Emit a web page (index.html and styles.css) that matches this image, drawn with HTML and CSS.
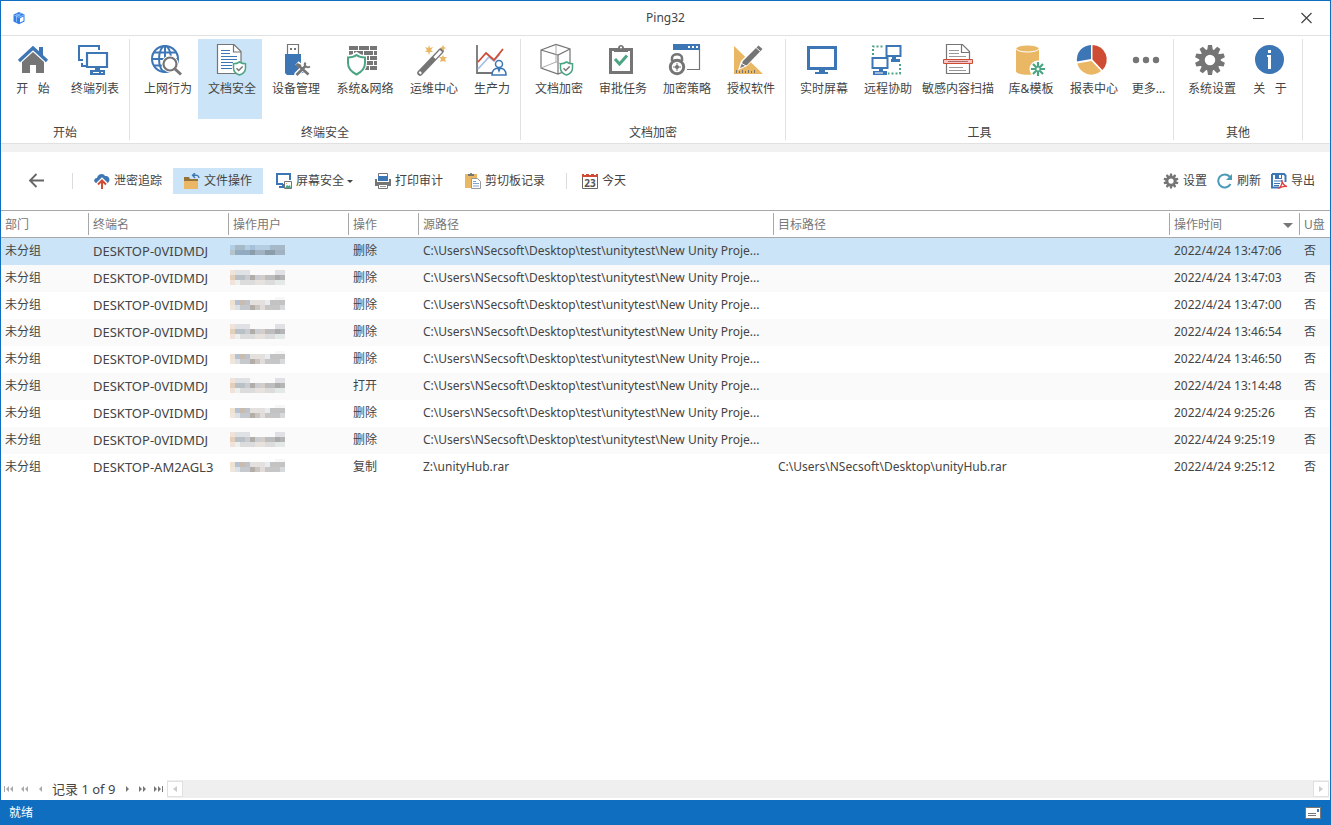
FILE: index.html
```html
<!DOCTYPE html>
<html lang="zh-CN">
<head>
<meta charset="utf-8">
<meta name="viewport" content="width=device-width, initial-scale=1">
<title>Ping32</title>
<link rel="stylesheet" href="styles.css">
</head>
<body>
<svg class="defs" aria-hidden="true">
  <defs>
    <symbol id="shield" viewBox="0 0 14 15">
      <path d="M7 1C5 2.3 3 2.8 1 2.8V7c0 3.500 2.500 5.800 6 7 3.500-1.200 6-3.500 6-7V2.800C11 2.800 9 2.300 7 1z" fill="#fff" stroke="#4ba583" stroke-width="1.500"/>
      <path d="M4 7.300l2.200 2.200L10.200 5.500" fill="none" stroke="#777" stroke-width="1.500"/>
    </symbol>
    <symbol id="gear" viewBox="0 0 32 32">
      <g fill="#757575">
        <path d="M14 1h4l1 6h-6zM14 31h4l1-6h-6z"/>
        <path d="M14 1h4l1 6h-6zM14 31h4l1-6h-6z" transform="rotate(36 16 16)"/>
        <path d="M14 1h4l1 6h-6zM14 31h4l1-6h-6z" transform="rotate(72 16 16)"/>
        <path d="M14 1h4l1 6h-6zM14 31h4l1-6h-6z" transform="rotate(108 16 16)"/>
        <path d="M14 1h4l1 6h-6zM14 31h4l1-6h-6z" transform="rotate(144 16 16)"/>
      </g>
      <circle cx="16" cy="16" r="8" fill="none" stroke="#757575" stroke-width="5.500"/>
    </symbol>
    <symbol id="mask-a" viewBox="0 0 11 3">
      <g shape-rendering="crispEdges">
        <path fill="#f1e3da" d="M0 0h1v1H0zM0 2h1v1H0z"/><path fill="#dfe1e5" d="M1 0h2v1H1zM3 0h1v1H3zM9 0h2v1H9z"/>
        <path fill="#e3cfba" d="M0 1h1v1H0z"/><path fill="#b9c0c6" d="M1 1h2v1H1z"/><path fill="#c9ccd0" d="M3 1h1v1H3zM5 1h1v1H5z"/>
        <path fill="#b1ada8" d="M4 1h1v1H4z"/><path fill="#d4cecb" d="M6 1h1v1H6z"/><path fill="#bdbdbd" d="M7 1h2v1H7z"/><path fill="#a9abad" d="M9 1h1v1H9z"/><path fill="#b5b5b5" d="M10 1h1v1h-1z"/>
        <path fill="#eeefef" d="M1 2h1v1H1z"/><path fill="#dcdcdc" d="M2 2h3v1H2zM7 2h2v1H7z"/><path fill="#e8e2df" d="M5 2h2v1H5z"/><path fill="#e2e9e7" d="M9 2h2v1H9z"/>
      </g>
    </symbol>
    <symbol id="mask-b" viewBox="0 0.4 11 3">
      <g shape-rendering="crispEdges">
        <path fill="#f7f7f7" d="M9 0h2v1H9z"/><path fill="#efe1d0" d="M0 1h1v1H0z"/><path fill="#b5c2d4" d="M1 1h1v1H1z"/><path fill="#c8bbb0" d="M2 1h1v1H2z"/><path fill="#bdc3cd" d="M3 1h1v1H3z"/><path fill="#e4e0dd" d="M4 1h3v1H4z"/><path fill="#e8ebef" d="M7 1h1v1H7z"/><path fill="#c3c3c3" d="M8 1h3v1H8z"/>
        <path fill="#f0e7dc" d="M0 2h1v1H0z"/><path fill="#dce1e8" d="M1 2h1v1H1z"/><path fill="#c5c9ce" d="M2 2h2v1H2z"/><path fill="#b4aea8" d="M4 2h1v1H4z"/><path fill="#c9c5c2" d="M5 2h1v1H5z"/><path fill="#e1dcd9" d="M6 2h1v1H6z"/><path fill="#c6c6c6" d="M7 2h3v1H7z"/><path fill="#d6dadd" d="M10 2h1v1h-1z"/>
      </g>
    </symbol>
    <symbol id="mask-sel" viewBox="0 0 11 3">
      <g shape-rendering="crispEdges">
        <path fill="#b3cde2" d="M0 .4h1v1H0zM3 .4h1v1H3zM5 .4h3v1H5z"/><path fill="#a6b9c9" d="M1 .4h2v1H1zM8 .4h3v1H8z"/><path fill="#a5c1d9" d="M4 .4h1v1H4z"/>
        <path fill="#b7c3cb" d="M0 1.400h1v1H0z"/><path fill="#93abc1" d="M1 1.400h3v1H1z"/><path fill="#8b9dab" d="M4 1.400h1v1H4zM7 1.400h2v1H7z"/><path fill="#a1b3c2" d="M5 1.400h2v1H5zM9 1.400h2v1H9z"/>
      </g>
    </symbol>
  </defs>
</svg>

<div class="app">
  <header class="titlebar">
    <svg class="logo" viewBox="0 0 14 14" aria-hidden="true"><path d="M7 1l5.500 2.500v7L7 13.200 1.500 10.500v-7z" fill="#2f7fe6"/><path d="M2 4l5 2.300 5-2.300M4 3l5 2.300M9.500 2.300L4.500 4.800v6" fill="none" stroke="#9cc8ff" stroke-width=".8"/><path d="M8 7.200l3.500-1.700v4.200L8 11.500z" fill="#fff"/></svg>
    <h1 class="title">Ping32</h1>
    <div class="window-buttons">
      <button class="window-button" type="button" aria-label="最小化"><svg width="12" height="12" viewBox="0 0 12 12"><path d="M1 6.500h11" stroke="#444"/></svg></button>
      <button class="window-button" type="button" aria-label="关闭"><svg width="12" height="12" viewBox="0 0 12 12"><path d="M1.500 1l10 10M11.500 1L1.500 11" stroke="#444" stroke-width="1.200"/></svg></button>
    </div>
  </header>

  <nav class="ribbon">
    <section class="group">
      <div class="group-items">
        <button class="tool tool-s" type="button">
          <svg class="icon" viewBox="0 0 32 32"><path d="M22 3h4v9l-4-4z" fill="#3d76b5"/><path d="M16 8l11 10v11h-8v-8h-6v8H5V18z" fill="#757575"/><path d="M2 17L16 4l14 13" fill="none" stroke="#3d76b5" stroke-width="3.200"/></svg>
          <span>开&nbsp; &nbsp;始</span></button>
        <button class="tool" type="button">
          <svg class="icon" viewBox="0 0 32 32"><path d="M6 16H2V2h20v4M5 19v3h4" fill="none" stroke="#3d76b5" stroke-width="2"/><path d="M10 9h20v14H10z" fill="#fff" stroke="#3d76b5" stroke-width="2.200"/><path d="M18 23h5v3h5v5H13v-5h5z" fill="#3d76b5"/><path d="M16 28.500h6M24 28.500h2" stroke="#fff"/></svg>
          <span>终端列表</span></button>
      </div>
      <h2 class="group-label">开始</h2>
    </section>

    <section class="group">
      <div class="group-items">
        <button class="tool" type="button">
          <svg class="icon" viewBox="0 0 32 32"><g fill="none" stroke="#3d76b5" stroke-width="2"><circle cx="15" cy="15" r="13"/><ellipse cx="15" cy="15" rx="6" ry="13"/><path d="M2 15h26M4 8.500h22M4 21.500h16M15 2v26"/></g><path d="M24 24l7 7" stroke="#fff" stroke-width="5"/><circle cx="20" cy="20" r="8.500" fill="#fff"/><circle cx="20" cy="20" r="6.500" fill="#fff" stroke="#757575" stroke-width="2.200"/><path d="M25 25l6 5.500" stroke="#757575" stroke-width="3"/></svg>
          <span>上网行为</span></button>
        <button class="tool is-active" type="button">
          <svg class="icon" viewBox="-2 0 32 32"><path d="M1.500 .5H18L25 7.500V29.500H1.500z" fill="#fff" stroke="#757575" stroke-width="1.200"/><path d="M17.500 .5v7.500H25" fill="none" stroke="#757575" stroke-width="1.200"/><path d="M5 6.500h9M5 9.500h9M5 12.500h16M5 15.500h16M5 18.500h12M5 21.500h11M5 24.500h11" stroke="#3d76b5" stroke-width="1.200"/><use href="#shield" x="16" y="17" width="15" height="15"/></svg>
          <span>文档安全</span></button>
        <button class="tool" type="button">
          <svg class="icon" viewBox="-2 0 32 32"><path d="M7.500 .5h11v10h-11z" fill="#fff" stroke="#757575" stroke-width="1.200"/><path d="M10 4h2v2h-2zM14 4h2v2h-2z" fill="#757575"/><path d="M5 10h16v10l4 8-6 2-4-1-1 2H7l-2-2z" fill="#3d76b5"/><path d="M17 19l13 12M29 18L16 31" stroke="#fff" stroke-width="5"/><path d="M19 22L28.500 30.500M26 21.500L16.500 31" stroke="#757575" stroke-width="2.600" fill="none"/><path d="M15.500 21l2-2 4 2-3 4z" fill="#757575"/><path d="M25.500 18.500c-2 3 1 6 4.500 4" stroke="#757575" stroke-width="2" fill="none"/></svg>
          <span>设备管理</span></button>
        <button class="tool tool-l" type="button">
          <svg class="icon" viewBox="0 0 32 32"><path d="M2 2h9v4H2zM12 2h10v4H12zM23 2h7v4h-7zM2 7h4v4H2zM7 7h9v4H7zM17 7h9v4h-9zM27 7h3v4h-3zM13 12h9v4h-9zM23 12h7v4h-7zM19 17h7v4h-7zM27 17h3v4h-3zM15 22h7v4h-7zM23 22h7v4h-7z" fill="#757575"/><path d="M9.500 10C7 12 4 13 1 13v6c0 6 3.500 9.500 8.500 12 5-2.500 8.500-6 8.500-12v-6c-3 0-6-1-8.500-3z" fill="#fff" stroke="#fff" stroke-width="4"/><path d="M9.500 11C7 13 4 13.500 1 13.500V19c0 5.500 3.500 9 8.500 11.500C14.500 28 18 24.500 18 19v-5.500c-3 0-6-.5-8.500-2.500z" fill="#fff" stroke="#4ba583" stroke-width="2"/></svg>
          <span>系统&amp;网络</span></button>
        <button class="tool" type="button">
          <svg class="icon" viewBox="0 0 32 32"><path d="M4 29L25 7" stroke="#757575" stroke-width="5.500" stroke-linecap="round"/><path d="M18.500 14l6.500-7" stroke="#fff" stroke-width="3"/><path d="M3.500 29.500l1.500-1.500" stroke="#fff" stroke-width="2.500"/><path d="M13 1l1 3 3-1-2 3 2 2-3 0-1 3-1-3-3 0 2-2-2-3 3 1zM27 1l1 2 2 1-2 1-1 2-1-2-2-1 2-1zM27 11l1 2 3 0-2 2 1 3-3-1-3 1 1-3-2-2 3 0z" fill="#eab765"/></svg>
          <span>运维中心</span></button>
        <button class="tool tool-xs" type="button">
          <svg class="icon" viewBox="-1 0 32 32"><path d="M2 1v28h17" fill="none" stroke="#757575" stroke-width="1.800"/><path d="M3 25L14 13l5 4 6-7" fill="none" stroke="#a9bfe2" stroke-width="1.800"/><path d="M3 18L11 9l8 7L28 5" fill="none" stroke="#cf4c34" stroke-width="1.800"/><path d="M17 31c0-5 2-7 7-7s7 2 7 7z" fill="#fff" stroke="#3d76b5" stroke-width="1.500"/><path d="M22 24l2 5 2-5" fill="#3d76b5"/><circle cx="24" cy="20" r="3.500" fill="#fff" stroke="#3d76b5" stroke-width="1.500"/></svg>
          <span>生产力</span></button>
      </div>
      <h2 class="group-label">终端安全</h2>
    </section>

    <section class="group">
      <div class="group-items">
        <button class="tool" type="button">
          <svg class="icon" viewBox="0 0 32 32"><path d="M0 6L15 .5 29 5v20l-12 5L0 24zM0 6l17 5 12-6M17 11v19" fill="none" stroke="#757575" stroke-width="1.200"/><path d="M0 24l15-6 14 5M15 .5V18" fill="none" stroke="#aaa"/><use href="#shield" x="18" y="17" width="15" height="15"/></svg>
          <span>文档加密</span></button>
        <button class="tool" type="button">
          <svg class="icon" viewBox="0 0 32 32"><path d="M5.500 5.500h21v23h-21z" fill="#fff" stroke="#757575" stroke-width="3"/><path d="M9 4h4c0-4 6-4 6 0h4v4H9z" fill="#757575"/><path d="M15 3.500h2" stroke="#fff" stroke-width="1.500"/><path d="M10 15l4.500 5L22 11.500" fill="none" stroke="#4ba583" stroke-width="3"/></svg>
          <span>审批任务</span></button>
        <button class="tool" type="button">
          <svg class="icon" viewBox="0 0 32 32"><path d="M4.500 1.500h26v24H18" fill="none" stroke="#757575" stroke-width="1.200"/><path d="M4 0h27v6H4z" fill="#3d76b5"/><path d="M19 2h2v2h-2zM23 2h2v2h-2zM27 2h2v2h-2z" fill="#fff"/><circle cx="8" cy="22" r="10" fill="#fff"/><path d="M3 17v-3c0-5 10-5 10 0v3" fill="none" stroke="#757575" stroke-width="2.500"/><circle cx="8" cy="23" r="6.700" fill="#fff" stroke="#757575" stroke-width="3"/><circle cx="8" cy="23" r="2" fill="#757575"/><path d="M8 19v8M4 23h8" stroke="#757575"/></svg>
          <span>加密策略</span></button>
        <button class="tool" type="button">
          <svg class="icon" viewBox="-1 0 32 32"><path d="M0 2l29 28H0z" fill="#eab765"/><path d="M2.500 26v3M5.500 27v2M8.500 26v3M11.500 27v2M14.500 26v3M17.500 27v2M20.500 26v3" stroke="#757575"/><path d="M4 26l3-9L24 0l6 5-17 17z" fill="#fff"/><path d="M6 24l3-7L24.500 1.500l4 3.500L13 21z" fill="#757575"/><path d="M22 3.500l4 3.700" stroke="#fff"/><path d="M7 19l5 3" stroke="#fff"/></svg>
          <span>授权软件</span></button>
      </div>
      <h2 class="group-label">文档加密</h2>
    </section>

    <section class="group">
      <div class="group-items">
        <button class="tool" type="button">
          <svg class="icon" viewBox="0 0 32 32"><path d="M2.500 3.500h27v21h-27z" fill="#fff" stroke="#3d76b5" stroke-width="3"/><path d="M13 25h6v3h3v2H9v-2h4z" fill="#3d76b5"/></svg>
          <span>实时屏幕</span></button>
        <button class="tool" type="button">
          <svg class="icon" viewBox="-1 0 32 32"><path d="M15.500 2h14v10h-14z" fill="#fff" stroke="#3d76b5" stroke-width="2"/><path d="M21 13h4v2h4v3h-9v-3h1zM8 25h4v2h4v4H2v-4h6z" fill="#3d76b5"/><path d="M4 29h8" stroke="#fff"/><path d="M1.500 14h15v10h-15z" fill="#fff" stroke="#3d76b5" stroke-width="2"/><path d="M2 11V2.500h10M29 20v9.500H17" fill="none" stroke="#4ba583" stroke-width="2" stroke-dasharray="2 2"/></svg>
          <span>远程协助</span></button>
        <button class="tool tool-xl" type="button">
          <svg class="icon" viewBox="0 0 32 32"><path d="M4.500 .5h16l7 7v22h-23z" fill="#fff" stroke="#757575" stroke-width="1.200"/><path d="M19.500 .5v8h8" fill="none" stroke="#757575" stroke-width="1.200"/><path d="M7 6.500h10M7 9.500h10M7 12.500h17M7 23.500h14M7 26.500h17" stroke="#999" stroke-width="1.200"/><path d="M1.500 15.500h29v4h-29z" fill="#f6c4c4" stroke="#cf4c34"/><path d="M6 17.500h20" stroke="#ad6868"/></svg>
          <span>敏感内容扫描</span></button>
        <button class="tool tool-m" type="button">
          <svg class="icon" viewBox="-2 0 32 32"><path d="M1 4v23c0 5 23 5 23 0V4z" fill="#eab765"/><ellipse cx="12.500" cy="4.500" rx="11.500" ry="3.500" fill="#eab765" stroke="#fff" stroke-width="1"/><circle cx="23" cy="25" r="8.500" fill="#fff"/><path d="M23 18v14M16 25h14M18 20l10 10M28 20L18 30" stroke="#4ba583" stroke-width="2.200"/><circle cx="23" cy="25" r="1.500" fill="#fff"/></svg>
          <span>库&amp;模板</span></button>
        <button class="tool" type="button">
          <svg class="icon" viewBox="0 0 32 32"><path d="M15 15V1A14.500 14.500 0 0 0 1 17.500z" fill="#3d76b5"/><path d="M16.500 15.500V1a14.500 14.500 0 0 1 9.800 25z" fill="#cf4c34"/><path d="M15.500 17L1.300 19.500A14.500 14.500 0 0 0 25 27z" fill="#eab765"/></svg>
          <span>报表中心</span></button>
        <button class="tool tool-2xs" type="button">
          <svg class="icon" viewBox="-1 0 32 32"><g fill="#757575"><circle cx="4" cy="16" r="3.200"/><circle cx="14" cy="16" r="3.200"/><circle cx="24" cy="16" r="3.200"/></g></svg>
          <span>更多...</span></button>
      </div>
      <h2 class="group-label">工具</h2>
    </section>

    <section class="group">
      <div class="group-items">
        <button class="tool" type="button">
          <svg class="icon"><use href="#gear"/></svg>
          <span>系统设置</span></button>
        <button class="tool tool-s" type="button">
          <svg class="icon" viewBox="0 0 32 32"><circle cx="15.500" cy="15.500" r="14.500" fill="#3d76b5"/><path d="M14 6h3v3h-3zM13 11h4v14h-3V13h-1z" fill="#fff"/></svg>
          <span>关&nbsp; &nbsp;于</span></button>
      </div>
      <h2 class="group-label">其他</h2>
    </section>
  </nav>

  <div class="toolbar">
    <button class="back" type="button" aria-label="返回"><svg width="16" height="16" viewBox="0 0 16 16"><path d="M16 7.500H2M8.500 1L2 7.500 8.500 14" fill="none" stroke="#666" stroke-width="1.800"/></svg></button>
    <span class="divider"></span>
    <button class="action" type="button"><svg width="16" height="16" viewBox="0 0 16 16"><path d="M3 10C-1 10-.5 5 3 5 4 0 10 0 11 3c5-1 6 6 2 7z" fill="#3d76b5"/><path d="M8 16V7M4 11l4-4 4 4" fill="none" stroke="#fff" stroke-width="4"/><path d="M8 16V7.500M4 11.500l4-4 4 4" fill="none" stroke="#cf4c34" stroke-width="2"/></svg>泄密追踪</button>
    <button class="action is-active" type="button"><svg width="16" height="16" viewBox="0 0 16 16"><path d="M0 4h5l1 2h8v2H0z" fill="#957238"/><path d="M0 8h14v8H0z" fill="#eab765"/><path d="M15 5c0-3-3-3-6-3M11 0L8.500 2.200 11 5" fill="none" stroke="#3d76b5" stroke-width="1.300"/></svg>文件操作</button>
    <button class="action" type="button"><svg width="16" height="16" viewBox="0 0 16 16"><path d="M7 11H1V1h13v6M7 11v3H3" fill="none" stroke="#3d76b5" stroke-width="2"/><path d="M8.500 8.500h7v7h-7z" fill="#fff" stroke="#757575"/><path d="M9 15l2-3 1.500 1L14 12l1 3z" fill="#4ba583"/><path d="M10 10h1v1h-1z" fill="#eab765"/></svg>屏幕安全<span class="caret"></span></button>
    <button class="action" type="button"><svg width="16" height="16" viewBox="0 0 16 16"><path d="M3.500 5V.5h9V5" fill="#fff" stroke="#757575"/><path d="M3 3h10v5H3z" fill="#3d76b5"/><path d="M0 6h2v3h12V6h2v7H0z" fill="#757575"/><path d="M3.500 11.500h9v4h-9z" fill="#fff" stroke="#757575"/><path d="M5 13.500h6" stroke="#999"/></svg>打印审计</button>
    <button class="action" type="button"><svg width="16" height="16" viewBox="0 0 16 16"><path d="M0 1h12v14H0z" fill="#eab765"/><path d="M3 1h2c0-1.500 2-1.500 2 0h2v2H3z" fill="#757575"/><path d="M6.500 5.500h6l3 3v7h-9z" fill="#fff" stroke="#999"/><path d="M8 8.500h3M8 10.500h6M8 13h6" stroke="#7fa5cf"/></svg>剪切板记录</button>
    <span class="divider"></span>
    <button class="action" type="button"><svg width="16" height="16" viewBox="0 0 16 16"><path d="M.5 3.500h15v12H.5z" fill="#fff" stroke="#666"/><path d="M0 1h2v1h2V1h3v1h2V1h3v1h2V1h2v3H0z" fill="#cf4c34"/><text class="calendar-day" x="8" y="14" text-anchor="middle">23</text></svg>今天</button>
    <div class="toolbar-end">
      <button class="action action-compact" type="button"><svg width="16" height="16"><use href="#gear"/></svg>设置</button>
      <button class="action action-compact" type="button"><svg width="16" height="16" viewBox="0 0 16 16"><path d="M13.500 11A6.500 6.500 0 1 1 12.500 3.500L14 5.500" fill="none" stroke="#4b9ab8" stroke-width="2"/><path d="M15 1v6H9z" fill="#4b9ab8"/></svg>刷新</button>
      <button class="action action-compact" type="button"><svg width="16" height="16" viewBox="0 0 16 16"><path d="M1 1h12l1.500 1.500V9M8 14.500H1V1" fill="none" stroke="#3d76b5" stroke-width="2"/><path d="M3 8h9M3 10.500h6M3 12.500h5" stroke="#3d76b5"/><path d="M4 1h7v5H4z" fill="#3d76b5"/><path d="M8 2h2v3H8z" fill="#fff"/><path d="M7.500 15.500C11 13 11.500 9 10.500 7c1 4 3 6 5.500 6.500-3-.5-6 .5-8.500 2z" fill="none" stroke="#e34040" stroke-width="1.300"/></svg>导出</button>
    </div>
  </div>

  <main class="content">
    <table class="records">
      <colgroup><col class="c-dept"><col class="c-host"><col class="c-user"><col class="c-op"><col class="c-src"><col><col class="c-time"><col class="c-usb"></colgroup>
      <thead><tr><th><span>部门</span></th><th><span>终端名</span></th><th><span>操作用户</span></th><th><span>操作</span></th><th><span>源路径</span></th><th><span>目标路径</span></th><th aria-sort="descending"><span class="sorted">操作时间<i class="sort-mark"></i></span></th><th><span>U盘</span></th></tr></thead>
      <tbody>
        <tr class="is-selected"><td>未分组</td><td class="host">DESKTOP-0VIDMDJ</td><td class="user"><svg class="mask"><use href="#mask-sel"/></svg></td><td>删除</td><td>C:\Users\NSecsoft\Desktop\test\unitytest\New Unity Proje...</td><td></td><td>2022/4/24 13:47:06</td><td>否</td></tr>
        <tr><td>未分组</td><td class="host">DESKTOP-0VIDMDJ</td><td class="user"><svg class="mask"><use href="#mask-a"/></svg></td><td>删除</td><td>C:\Users\NSecsoft\Desktop\test\unitytest\New Unity Proje...</td><td></td><td>2022/4/24 13:47:03</td><td>否</td></tr>
        <tr><td>未分组</td><td class="host">DESKTOP-0VIDMDJ</td><td class="user"><svg class="mask"><use href="#mask-b"/></svg></td><td>删除</td><td>C:\Users\NSecsoft\Desktop\test\unitytest\New Unity Proje...</td><td></td><td>2022/4/24 13:47:00</td><td>否</td></tr>
        <tr><td>未分组</td><td class="host">DESKTOP-0VIDMDJ</td><td class="user"><svg class="mask"><use href="#mask-a"/></svg></td><td>删除</td><td>C:\Users\NSecsoft\Desktop\test\unitytest\New Unity Proje...</td><td></td><td>2022/4/24 13:46:54</td><td>否</td></tr>
        <tr><td>未分组</td><td class="host">DESKTOP-0VIDMDJ</td><td class="user"><svg class="mask"><use href="#mask-b"/></svg></td><td>删除</td><td>C:\Users\NSecsoft\Desktop\test\unitytest\New Unity Proje...</td><td></td><td>2022/4/24 13:46:50</td><td>否</td></tr>
        <tr><td>未分组</td><td class="host">DESKTOP-0VIDMDJ</td><td class="user"><svg class="mask"><use href="#mask-a"/></svg></td><td>打开</td><td>C:\Users\NSecsoft\Desktop\test\unitytest\New Unity Proje...</td><td></td><td>2022/4/24 13:14:48</td><td>否</td></tr>
        <tr><td>未分组</td><td class="host">DESKTOP-0VIDMDJ</td><td class="user"><svg class="mask"><use href="#mask-b"/></svg></td><td>删除</td><td>C:\Users\NSecsoft\Desktop\test\unitytest\New Unity Proje...</td><td></td><td>2022/4/24 9:25:26</td><td>否</td></tr>
        <tr><td>未分组</td><td class="host">DESKTOP-0VIDMDJ</td><td class="user"><svg class="mask"><use href="#mask-a"/></svg></td><td>删除</td><td>C:\Users\NSecsoft\Desktop\test\unitytest\New Unity Proje...</td><td></td><td>2022/4/24 9:25:19</td><td>否</td></tr>
        <tr><td>未分组</td><td class="host">DESKTOP-AM2AGL3</td><td class="user"><svg class="mask"><use href="#mask-b"/></svg></td><td>复制</td><td>Z:\unityHub.rar</td><td>C:\Users\NSecsoft\Desktop\unityHub.rar</td><td>2022/4/24 9:25:12</td><td>否</td></tr>
      </tbody>
    </table>
  </main>

  <div class="navigator">
    <button class="nav-button" type="button" aria-label="第一条"><svg width="10" height="8" viewBox="0 0 10 8"><path d="M0 1h1v6H0zM5 1v6L2 4zM9 1v6L6 4z" fill="#aaa"/></svg></button>
    <button class="nav-button" type="button" aria-label="上一页"><svg width="10" height="8" viewBox="0 0 10 8"><path d="M4 1v6L1 4zM8 1v6L5 4z" fill="#aaa"/></svg></button>
    <button class="nav-button" type="button" aria-label="上一条"><svg width="10" height="8" viewBox="0 0 10 8"><path d="M6 1v6L3 4z" fill="#aaa"/></svg></button>
    <span class="position">记录 1 of 9</span>
    <button class="nav-button" type="button" aria-label="下一条"><svg width="10" height="8" viewBox="0 0 10 8"><path d="M4 1v6l3-3z" fill="#777"/></svg></button>
    <button class="nav-button" type="button" aria-label="下一页"><svg width="10" height="8" viewBox="0 0 10 8"><path d="M1 1v6l3-3zM5 1v6l3-3z" fill="#777"/></svg></button>
    <button class="nav-button" type="button" aria-label="最后一条"><svg width="10" height="8" viewBox="0 0 10 8"><path d="M0 1v6l3-3zM4 1v6l3-3zM8 1h1v6H8z" fill="#777"/></svg></button>
    <div class="scrollbar">
      <button class="scroll-button" type="button" aria-label="向左滚动"><svg width="6" height="8" viewBox="0 0 6 8"><path d="M5 1v6L1 4z" fill="#ccc"/></svg></button>
      <button class="scroll-button" type="button" aria-label="向右滚动"><svg width="6" height="8" viewBox="0 0 6 8"><path d="M1 1v6l4-3z" fill="#ccc"/></svg></button>
    </div>
  </div>

  <footer class="statusbar">
    <span>就绪</span>
    <svg width="16" height="12" viewBox="0 0 16 12" aria-hidden="true"><path d="M.5 .5h15v11H.5z" fill="#fff" stroke="#777"/><path d="M12 2h2v3h-2z" fill="#3d76b5"/><path d="M3 6.500h8M3 8.500h8" stroke="#777"/></svg>
  </footer>
</div>
</body>
</html>
```
FILE: styles.css
```css
* { box-sizing: border-box; }

body {
  margin: 0;
  background: #fff;
  color: #444;
  font: 12px/16px "Noto Sans", "Noto Sans CJK SC", sans-serif;
}

button {
  border: 0;
  padding: 0;
  background: transparent;
  color: inherit;
  font: inherit;
  white-space: nowrap;
}

svg { display: block; flex: none; }

.defs { position: absolute; width: 0; height: 0; }

.app {
  display: flex;
  flex-direction: column;
  min-height: 100vh;
  border: 1px solid #0f6ebf;
  border-bottom: 0;
}

/* Title bar */
.titlebar {
  display: grid;
  grid-template-columns: 1fr auto 1fr;
  align-items: center;
  height: 35px;
  border-bottom: 1px solid #e1e1e1;
}
.logo { width: 14px; height: 14px; margin-left: 11px; }
.title { margin: 0; font-size: 12px; font-weight: 400; }
.window-buttons { display: flex; justify-content: flex-end; }
.window-button { display: grid; place-items: center; width: 48px; height: 34px; }

/* Ribbon */
.ribbon {
  display: flex;
  height: 108px;
  padding: 3px 0;
  border-bottom: 1px solid #e1e1e1;
}
.group {
  display: flex;
  flex-direction: column;
  justify-content: space-between;
  padding: 0 4px;
  border-right: 1px solid #e1e1e1;
}
.group-items { display: flex; }
.tool {
  display: flex;
  flex-direction: column;
  align-items: center;
  gap: 5px;
  width: 64px;
  height: 80px;
  padding-top: 5px;
}
.tool span { padding-left: 4px; }
.tool-2xs { width: 45px; }
.tool-xs { width: 52px; }
.tool-s { width: 56px; }
.tool-m { width: 62px; }
.tool-l { width: 74px; }
.tool-xl { width: 80px; }
.tool-s span, .tool-xl span { padding-left: 0; }
.tool.is-active, .action.is-active { background: #cce4f7; }
.icon { width: 32px; height: 32px; overflow: visible; }
.group-label { margin: 0; font-size: 12px; font-weight: 400; line-height: 14px; text-align: center; }

/* Toolbar */
.toolbar {
  display: flex;
  align-items: center;
  height: 66px;
  padding: 0 15px 0 27px;
  border-top: 8px solid #f1f1f1;
}
.back { height: 26px; }
.divider { width: 1px; height: 16px; margin: 0 10px 0 28px; background: #dcdcdc; }
.action + .divider { margin: 0 4px 0 10px; }
.action {
  display: flex;
  align-items: center;
  gap: 4px;
  height: 26px;
  padding: 0 11px;
}
.action.is-active + .action { margin-left: 2px; }
.caret { border: 3px solid transparent; border-top-color: #444; border-bottom: 0; margin-left: -1px; }
.calendar-day { fill: #555; font: 700 10px "Noto Sans", sans-serif; }
.toolbar-end { display: flex; gap: 10px; margin-left: auto; }
.action-compact { padding: 0; }

/* Records */
.content { flex: 1; }
.records { width: 100%; table-layout: fixed; border-collapse: separate; border-spacing: 0; }
.c-dept { width: 88px; }
.c-host { width: 140px; }
.c-user { width: 120px; }
.c-op { width: 70px; }
.c-src { width: 355px; }
.c-time { width: 130px; }
.c-usb { width: 30px; }
.records th {
  height: 28px;
  padding: 0;
  border: solid #a8a8a8;
  border-width: 1px 0;
  color: #777;
  font-weight: 400;
  text-align: left;
}
.records th span { display: block; padding: 2px 0 0 4px; border-right: 1px solid #a8a8a8; line-height: 20px; }
.records th:last-child span { border-right: 0; }
.records th .sorted { display: flex; align-items: center; justify-content: space-between; padding-right: 6px; }
.sort-mark { border: 5px solid transparent; border-top-color: #777; border-bottom: 0; }
.records td { height: 27px; padding: 0 0 2px 4px; white-space: nowrap; overflow: hidden; }
.records tr:nth-child(even) td { background: #fafafa; }
.records .is-selected td { background: #cce4f7; }
.records .host { font-size: 13px; }
.records .user { padding-left: 1px; }
.mask { width: 55px; height: 15px; }

/* Record navigator */
.navigator { display: flex; align-items: center; height: 20px; padding: 0 1px 2px 0; }
.nav-button { display: grid; place-items: center; width: 16px; height: 16px; }
.position { margin: 0 4px 0 3px; font-size: 13px; }
.scrollbar { display: flex; flex: 1; justify-content: space-between; height: 18px; padding: 1px 0; background: #efefef; }
.scroll-button { display: grid; place-items: center; width: 16px; height: 16px; border: 1px solid #e1e1e1; background: #fff; }

/* Status bar */
.statusbar {
  display: flex;
  align-items: center;
  justify-content: space-between;
  height: 25px;
  padding: 0 9px 0 8px;
  background: #0f6ebf;
  color: #fff;
}
```
